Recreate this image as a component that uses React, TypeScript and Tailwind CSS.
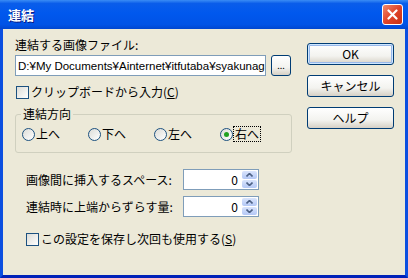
const Check = () => (
  <span className="w-[13px] h-[13px] shrink-0 border border-[#1C5180] bg-[linear-gradient(135deg,#DCDCD7,#FFFFFF)]" />
);

const Radio = ({ checked }: { checked?: boolean }) => (
  <span className="w-[13px] h-[13px] shrink-0 rounded-full border border-[#1C5180] bg-[linear-gradient(135deg,#DCDCD7,#FFFFFF)] flex items-center justify-center">
    {checked && <span className="w-[5px] h-[5px] rounded-full bg-[#21A121]" />}
  </span>
);

const Spin = ({ value }: { value: string }) => (
  <div className="w-[76px] h-[21px] border border-[#7F9DB9] bg-white flex items-stretch py-[1px] pr-[1px]">
    <span className="flex-1 text-right pr-[4px] self-center">{value}</span>
    <div className="w-[15px] flex flex-col gap-[1px]">
      <span className="flex-1 rounded-[2px] bg-[linear-gradient(to_bottom,#D9E4FC,#B4C8F6)] flex items-center justify-center">
        <svg width="7" height="4" viewBox="0 0 7 4">
          <path d="M0.5 3.5 L3.5 0.5 L6.5 3.5" fill="none" stroke="#4D6185" strokeWidth="1.6" />
        </svg>
      </span>
      <span className="flex-1 rounded-[2px] bg-[linear-gradient(to_bottom,#D9E4FC,#B4C8F6)] flex items-center justify-center">
        <svg width="7" height="4" viewBox="0 0 7 4">
          <path d="M0.5 0.5 L3.5 3.5 L6.5 0.5" fill="none" stroke="#4D6185" strokeWidth="1.6" />
        </svg>
      </span>
    </div>
  </div>
);

const XpButton = ({ children, def }: { children: React.ReactNode; def?: boolean }) => (
  <button
    className={`w-[87px] h-[22px] rounded-[3px] border border-[#003C74] bg-[linear-gradient(to_bottom,#FFFFFF,#F3F3EF_60%,#D6D0C5)] flex items-center justify-center ${
      def ? 'shadow-[inset_0_0_0_1px_#CEE7FF,inset_0_0_0_2px_#98B8EA]' : ''
    }`}
  >
    {children}
  </button>
);

export default function App() {
  return (
    <div className="w-[408px] h-[278px] flex flex-col overflow-hidden text-black text-[12px] leading-[14px] font-['Noto_Sans_CJK_JP',sans-serif]">
      {/* title bar */}
      <div className="h-[29px] shrink-0 flex items-center justify-between pl-[8px] pr-[5px] bg-[linear-gradient(to_bottom,#3A8CF5_0%,#0A5DEA_12%,#0058EE_45%,#0053E6_85%,#0046CF_100%)]">
        <span className="text-white font-bold text-[13px] leading-[15px] [text-shadow:1px_1px_#0A1883]">連結</span>
        <div className="w-[21px] h-[21px] rounded-[3px] border border-white bg-[linear-gradient(135deg,#F08A6E,#E0442A_50%,#C63014)] flex items-center justify-center">
          <svg width="11" height="11" viewBox="0 0 11 11">
            <path d="M1.5 1.5 L9.5 9.5 M9.5 1.5 L1.5 9.5" stroke="white" strokeWidth="2.2" strokeLinecap="round" />
          </svg>
        </div>
      </div>

      {/* body */}
      <div className="flex-1 flex bg-[#ECE9D8] border-x-[3px] border-b-[3px] border-x-[#0B4FE0] border-b-[#0021B8]">
        <div className="w-[290px] shrink-0 pl-[12px] pt-[9px]">
          <div>連結する画像ファイル:</div>

          <div className="flex mt-[3px] gap-[5px]">
            <div className="w-[251px] h-[21px] border border-[#7F9DB9] bg-white pl-[2px] flex items-center overflow-hidden whitespace-nowrap text-[11.5px] font-['Liberation_Sans','Noto_Sans_CJK_JP',sans-serif]">
              D:¥My Documents¥Ainternet¥itfutaba¥syakunag
            </div>
            <button className="w-[20px] h-[21px] rounded-[3px] border border-[#003C74] bg-[linear-gradient(to_bottom,#FFFFFF,#F3F3EF_60%,#D6D0C5)] flex items-end justify-center pb-[5px] text-[9px] leading-[9px]">
              ...
            </button>
          </div>

          <label className="flex items-center gap-[2px] mt-[9px] pl-[1px]">
            <Check />
            <span>
              クリップボードから入力(<u>C</u>)
            </span>
          </label>

          <fieldset className="mt-[8px] w-[277px] border border-[#D0D0BF] rounded-[3px] pt-[6px] pb-[11px]">
            <legend className="ml-[5px] px-[2px]">連結方向</legend>
            <div className="flex pl-[6px]">
              {['上へ', '下へ', '左へ', '右へ'].map((t, i) => (
                <label key={t} className="w-[66px] flex items-center gap-[1px]">
                  <Radio checked={i === 3} />
                  <span className={i === 3 ? 'outline outline-1 outline-dotted outline-black px-[1px]' : ''}>{t}</span>
                </label>
              ))}
            </div>
          </fieldset>

          <div className="flex items-center mt-[16px] pl-[11px]">
            <span className="w-[157px]">画像間に挿入するスペース:</span>
            <Spin value="0" />
          </div>
          <div className="flex items-center mt-[6px] pl-[11px]">
            <span className="w-[157px]">連結時に上端からずらす量:</span>
            <Spin value="0" />
          </div>

          <label className="flex items-center gap-[2px] mt-[15px] pl-[11px]">
            <Check />
            <span>
              この設定を保存し次回も使用する(<u>S</u>)
            </span>
          </label>
        </div>

        <div className="ml-[14px] pt-[14px] flex flex-col gap-[10px]">
          <XpButton def>OK</XpButton>
          <XpButton>キャンセル</XpButton>
          <XpButton>ヘルプ</XpButton>
        </div>
      </div>
    </div>
  );
}
